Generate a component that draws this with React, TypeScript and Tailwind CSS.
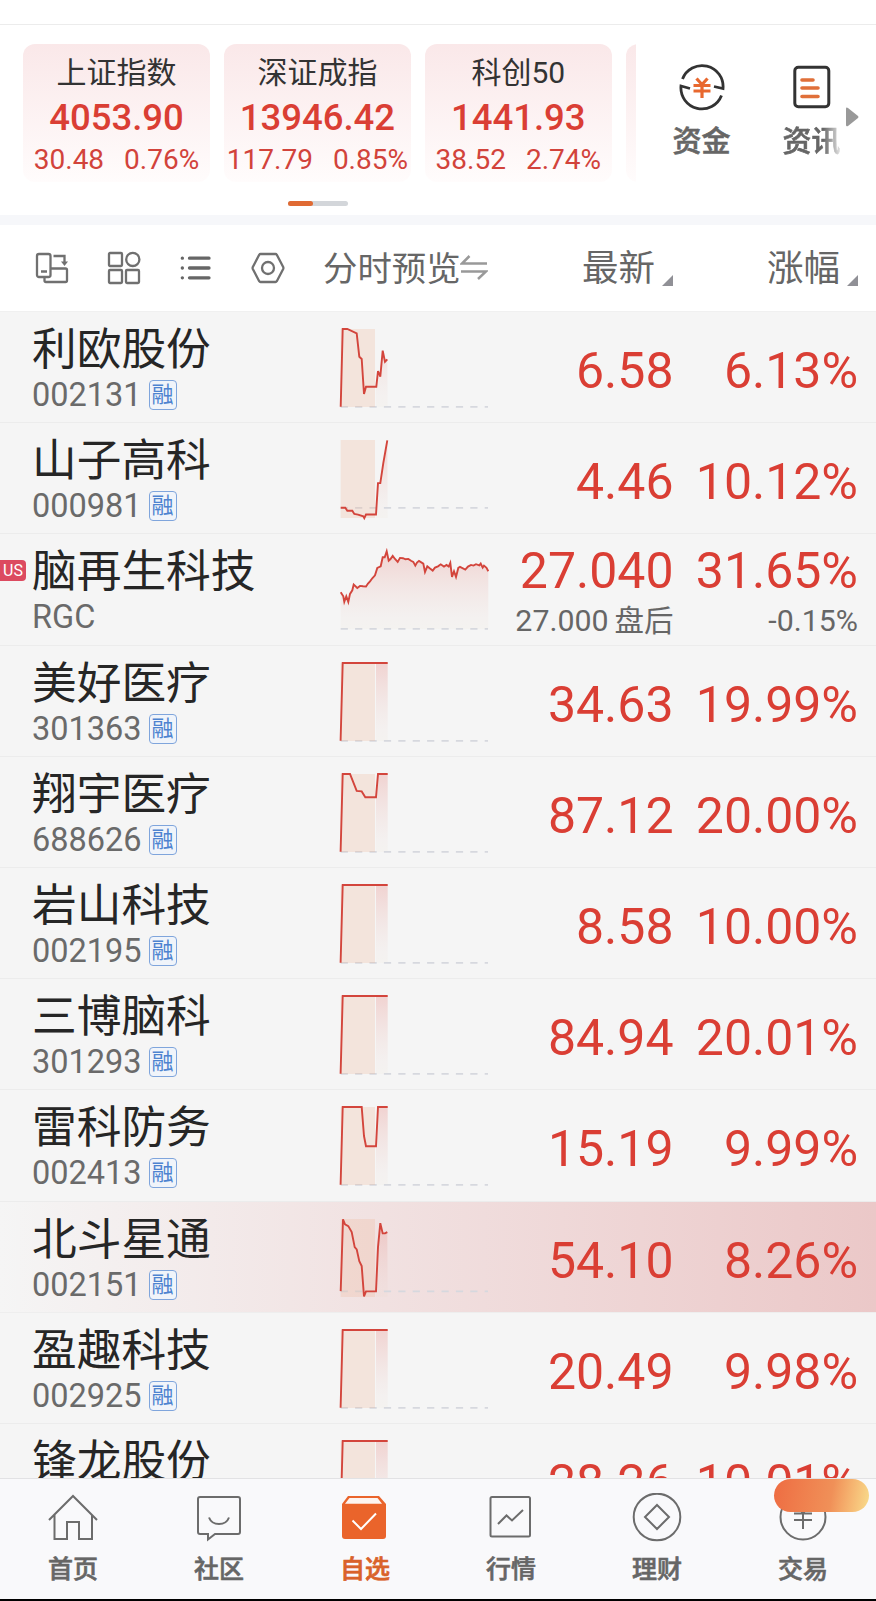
import React from 'react';

interface IndexCardProps {
  name: string;
  value: string;
  change: string;
  percent: string;
}

interface Stock {
  name: string;
  code: string;
  price: string;
  percent: string;
  line: string;
  base?: number;
  margin?: boolean;
  market?: string;
  fullDay?: boolean;
  afterPrice?: string;
  afterPercent?: string;
  highlight?: boolean;
}

const LIMIT_UP = '5.6,94.7 7.7,17 52.7,17';

const indexes: IndexCardProps[] = [
  { name: '上证指数', value: '4053.90', change: '30.48', percent: '0.76%' },
  { name: '深证成指', value: '13946.42', change: '117.79', percent: '0.85%' },
  { name: '科创50', value: '1441.93', change: '38.52', percent: '2.74%' },
];

const stocks: Stock[] = [
  {
    name: '利欧股份', code: '002131', price: '6.58', percent: '6.13%', margin: true,
    line: '5.7,94.7 7.7,17 12.3,17 21.7,21.3 24.3,44.7 26.7,47 29,82 31,74.7 41.3,74.7 43,59 45.3,64.7 47.7,38.7 50,49.7 52.3,47.3',
  },
  {
    name: '山子高科', code: '000981', price: '4.46', percent: '10.12%', margin: true, base: 84.8,
    line: '5.7,84.8 10.3,84.8 12.3,87.8 17.3,87.8 19.3,91 23,91.6 28.3,93.3 29.3,95.1 31,91.5 41,91.5 43,60.1 45.3,60.1 48.3,40.1 52.3,17.3',
  },
  {
    name: '脑再生科技', code: 'RGC', price: '27.040', percent: '31.65%', market: 'US', fullDay: true,
    afterPrice: '27.000', afterPercent: '-0.15%',
    line: '5.7,58.3 8.3,62.3 9.3,67.9 11.3,62.3 13.3,67.9 15,59.9 17.3,56.3 18.7,50.6 22.3,53.9 25,51.9 28,52.3 31,52.6 33,49.5 35,47.3 37.5,44 40,41.3 42.3,33.9 45.7,32.3 47.7,23.3 49.7,23.3 51.7,17.3 53.7,26.6 55.5,25 57.7,21.9 60,25 62.7,27.9 65,23.9 68,24.2 70.5,25.3 73.3,24.9 76,26.8 78.3,27.9 80.3,31.6 82,28.6 84,26.9 88.3,29.6 90,37.9 92.3,32.3 95,34.5 97.7,36.6 100,33.6 103,32.3 105.7,30.3 109,32.6 111.5,31 113.7,32.6 115.3,28.9 117,42.9 119,37.3 121,42.9 123.3,33.9 125,32.8 130.3,35.6 133,32.6 136,30.9 138.5,31.6 141,30.2 144.3,31.3 145.7,29.6 147.7,33.6 149,31.6 151.5,33.8 153.3,37.3',
  },
  { name: '美好医疗', code: '301363', price: '34.63', percent: '19.99%', margin: true, line: LIMIT_UP },
  {
    name: '翔宇医疗', code: '688626', price: '87.12', percent: '20.00%', margin: true,
    line: '5.6,94.7 7.7,17 15,17 21.7,33.9 26.7,34.4 30.3,40.2 41,40.2 43,17 52.7,17',
  },
  { name: '岩山科技', code: '002195', price: '8.58', percent: '10.00%', margin: true, line: LIMIT_UP },
  { name: '三博脑科', code: '301293', price: '84.94', percent: '20.01%', margin: true, line: LIMIT_UP },
  {
    name: '雷科防务', code: '002413', price: '15.19', percent: '9.99%', margin: true,
    line: '5.6,94.7 7.7,17 26.7,17 29,46 31,56.3 41,56.3 43,17 52.7,17',
  },
  {
    name: '北斗星通', code: '002151', price: '54.10', percent: '8.26%', margin: true, base: 89.4, highlight: true,
    line: '5.7,89.1 8,17.4 10,22.4 13.3,24.1 16.7,30.1 19.7,45.1 21.7,47.4 24.3,59.1 26.7,64.1 29,94.4 31,89.4 41,89.4 43,45.1 45.3,21.1 47.7,31.4 50,31.4 52.3,30.1',
  },
  { name: '盈趣科技', code: '002925', price: '20.49', percent: '9.98%', margin: true, line: LIMIT_UP },
  { name: '锋龙股份', code: '002931', price: '28.26', percent: '10.01%', margin: true, line: LIMIT_UP },
];

const IndexCard: React.FC<IndexCardProps> = ({ name, value, change, percent }) => (
  <div className="flex flex-col items-center shrink-0 w-[187px] h-[138px] rounded-xl bg-linear-to-b from-[#fae8e9] to-[#fffcfc] whitespace-nowrap">
    <div className="mt-[9px] h-10 text-[30px] leading-10 text-[#333]">{name}</div>
    <div className="h-[46px] mt-[2px] text-[36.5px] leading-[46px] font-medium text-[#da3e34]">{value}</div>
    <div className="flex gap-5 h-9 mt-px text-[28px] leading-9 text-[#d2433b]">
      <span>{change}</span>
      <span>{percent}</span>
    </div>
  </div>
);

const Sparkline: React.FC<{ stock: Stock; id: string }> = ({ stock, id }) => {
  const base = stock.base ?? 94.8;
  const end = stock.fullDay ? 153.3 : 52.7;
  return (
    <svg width="160" height="111" viewBox="0 0 160 111" className="shrink-0">
      <defs>
        <linearGradient id={`fill-${id}`} gradientUnits="userSpaceOnUse" x1="0" y1="17" x2="0" y2="95">
          <stop offset="0" stopColor="#e0483f" stopOpacity="0.2" />
          <stop offset="0.85" stopColor="#e0a090" stopOpacity="0.05" />
          <stop offset="1" stopColor="#e0c090" stopOpacity="0.05" />
        </linearGradient>
        <clipPath id={`clip-${id}`}>
          <rect x={stock.fullDay ? 5 : 41} y="0" width="150" height="111" />
        </clipPath>
      </defs>
      <polygon
        points={`5.7,95 ${stock.line} ${end},95`}
        fill={`url(#fill-${id})`}
        clipPath={`url(#clip-${id})`}
      />
      <path d={`M5.7 ${base}H153`} stroke="#d6d8de" strokeWidth="1.7" strokeDasharray="7.2 7.2" />
      {!stock.fullDay && <rect x="5.7" y="17" width="34.3" height="78" fill="#f0b497" fillOpacity="0.26" />}
      <polyline points={stock.line} fill="none" stroke="#d3453c" strokeWidth="1.9" />
    </svg>
  );
};

const StockRow: React.FC<{ stock: Stock; id: string }> = ({ stock, id }) => (
  <div
    className={
      stock.highlight
        ? 'flex shrink-0 h-[111.2px] border-b border-[#eee] bg-linear-to-r from-[#f5f5f5] to-[#ebc8c8]'
        : 'flex shrink-0 h-[111.2px] border-b border-[#ececec]'
    }
  >
    <div className="relative w-[335px] pl-8 shrink-0">
      {stock.market && (
        <span className="absolute left-0 top-[26px] w-[26px] h-[21px] pl-[3px] rounded-r bg-[#dc4a60] text-[16px] leading-[21px] text-white">
          {stock.market}
        </span>
      )}
      <div className="h-[61px] pt-[8px] text-[44.7px] leading-[60px] text-[#262626] whitespace-nowrap">{stock.name}</div>
      <div className="flex items-center gap-[7px] h-[44px] text-[32.5px] leading-[44px] text-[#6a6a6a]">
        <span>{stock.code}</span>
        {stock.margin && (
          <span className="flex items-center justify-center w-7 h-[30px] rounded-[4px] border border-[#7fa5dc] bg-[#f0f4fa] text-[22px] leading-none text-[#4d83d0]">
            融
          </span>
        )}
      </div>
    </div>
    <Sparkline stock={stock} id={id} />
    {stock.afterPrice ? (
      <>
        <div className="flex flex-col items-end w-[178.5px] shrink-0">
          <div className="h-[65px] pt-[7px] text-[50px] leading-[60px] text-[#da3e34]">{stock.price}</div>
          <div className="flex gap-[6px] h-[44px] text-[30.3px] leading-[44px] text-[#666] whitespace-nowrap">
            <span>{stock.afterPrice}</span>
            <span className="text-[29.5px]">盘后</span>
          </div>
        </div>
        <div className="flex flex-col items-end w-[184.5px] shrink-0">
          <div className="h-[65px] pt-[7px] text-[50px] leading-[60px] text-[#da3e34]">{stock.percent}</div>
          <div className="h-[44px] text-[30.3px] leading-[44px] text-[#666]">{stock.afterPercent}</div>
        </div>
      </>
    ) : (
      <>
        <div className="w-[178.5px] pt-[4px] shrink-0 text-right text-[50px] leading-[111px] text-[#da3e34]">{stock.price}</div>
        <div className="w-[184.5px] pt-[4px] shrink-0 text-right text-[50px] leading-[111px] text-[#da3e34]">{stock.percent}</div>
      </>
    )}
  </div>
);

const FundsIcon = () => (
  <svg width="48" height="48" viewBox="0 0 48 48" fill="none" stroke="#333" strokeWidth="2.8">
    <path d="M4.5 16A21 21 0 0 1 45 25.5L36 23.5" />
    <path d="M43.5 32.5A21 21 0 0 1 3 23L12 25.5" />
    <path d="M18.5 15.5L24 21.5L29.5 15.5M15.5 22.5H32.5M15.5 28H32.5M24 21.5V35" stroke="#e8682f" strokeWidth="3.2" />
  </svg>
);

const NewsIcon = () => (
  <svg width="38" height="44" viewBox="0 0 38 44" fill="none" stroke="#333" strokeWidth="3">
    <rect x="1.8" y="2.2" width="34" height="39.5" rx="3.5" />
    <path d="M9 15H20M9 23H25M9 31.5H25" stroke="#e0703a" strokeWidth="3.6" strokeLinecap="round" />
  </svg>
);

const SortMark = () => (
  <svg width="11" height="11" viewBox="0 0 12 12">
    <path d="M12 0V12H0Z" fill="#909096" />
  </svg>
);

const ToolIcons = () => (
  <div className="flex items-center gap-[36px] w-[286px] shrink-0">
    <svg width="36" height="36" viewBox="0 0 36 36" fill="none" stroke="#707070" strokeWidth="2.3" className="shrink-0">
      <rect x="3" y="4" width="13.5" height="23" rx="2" />
      <path d="M7 21.5H13M19.5 6H30.5V14" />
      <path d="M27 11.5H34L30.5 16Z" fill="#707070" stroke="none" />
      <path d="M17 18.5H31.5Q33 18.5 33 20V30.5Q33 32 31.5 32H12Q10.5 32 10.5 30.5V27" />
    </svg>
    <svg width="36" height="36" viewBox="0 0 36 36" fill="none" stroke="#707070" strokeWidth="2.3" className="shrink-0">
      <rect x="3" y="3" width="13" height="13" rx="1" />
      <circle cx="26.8" cy="9.4" r="6.6" />
      <rect x="3" y="20" width="13" height="13" rx="1" />
      <rect x="20" y="20" width="13" height="13" rx="1" />
    </svg>
    <svg width="36" height="36" viewBox="0 0 36 36" fill="none" stroke="#666" strokeWidth="3.3" strokeLinecap="round" className="shrink-0">
      <path d="M4.3 8.2H4.4M11.5 8.2H31M4.3 18H4.4M11.5 18H31M4.3 27.8H4.4M11.5 27.8H31" />
    </svg>
    <svg width="36" height="36" viewBox="0 0 36 36" fill="none" stroke="#707070" strokeWidth="2.3" strokeLinejoin="round" className="shrink-0">
      <path d="M10.5 4H25.5Q26.3 4 26.8 4.8L33.2 17Q33.6 18 33.2 19L26.8 31.2Q26.3 32 25.5 32H10.5Q9.7 32 9.2 31.2L2.8 19Q2.4 18 2.8 17L9.2 4.8Q9.7 4 10.5 4Z" />
      <circle cx="18" cy="18" r="6" />
    </svg>
  </div>
);

const navItems = [
  {
    label: '首页',
    icon: <path d="M1 27L25 3L49 27M6.5 22V46H19V29H31V46H44V22" />,
  },
  {
    label: '社区',
    icon: (
      <>
        <path d="M6 4H44Q46 4 46 6V39Q46 41 44 41H21L14 46.5V41H6Q4 41 4 39V6Q4 4 6 4Z" />
        <path d="M15 24.5Q17.5 31 25 31Q32.5 31 35 24.5" />
      </>
    ),
  },
  {
    label: '自选',
    active: true,
    icon: (
      <>
        <path d="M8 3H39L46 11V43Q46 46 43 46H5Q2 46 2 43V11Z" fill="#ea642b" stroke="none" />
        <path d="M9.5 5H37.5L42 10.7H5Z" fill="#fdf4f0" stroke="none" />
        <path d="M12.5 27.5L21 36L36 20.5" stroke="#fff" />
      </>
    ),
  },
  {
    label: '行情',
    icon: (
      <>
        <rect x="4.5" y="4" width="39.5" height="39.5" rx="1.5" />
        <path d="M12 31L20.5 22.5L26 27.5L37 17" />
      </>
    ),
  },
  {
    label: '理财',
    icon: (
      <>
        <circle cx="25" cy="24" r="23.3" />
        <path d="M25 12L37 24L25 36L13 24Z" />
      </>
    ),
  },
  {
    label: '交易',
    icon: (
      <>
        <circle cx="25" cy="24" r="22.5" />
        <path d="M17 11L25 20L33 11M16 20.5H34M16 27H34M25 20V36" />
      </>
    ),
  },
];

const App: React.FC = () => {
  return (
    <main className="flex flex-col w-[876px] h-[1601px] overflow-hidden bg-white font-[Roboto,'Noto_Sans_CJK_SC',sans-serif]">
      <div className="h-[25px] shrink-0 border-b border-[#ececec]" />

      <section className="flex h-[190px] shrink-0">
        <div className="w-[636px] shrink-0">
          <div className="flex gap-[13.9px] h-[157px] pt-[18.5px] pl-[23px] overflow-hidden">
            {indexes.map((item) => (
              <IndexCard key={item.name} {...item} />
            ))}
            <div className="shrink-0 w-[187px] h-[138px] rounded-xl bg-linear-to-b from-[#fae8e9] to-[#fffcfc]" />
          </div>
          <div className="w-[60px] h-[5px] mt-[19px] ml-[288px] rounded-full bg-[#d3d6da]">
            <div className="w-[25px] h-[5px] rounded-full bg-[#e06a33]" />
          </div>
        </div>
        <div className="flex w-[240px] pl-[11px]">
          <div className="flex flex-col items-center w-[109px] pt-[38px]">
            <FundsIcon />
            <span className="mt-[10px] text-[29px] leading-[42px] font-medium text-[#666] [-webkit-text-stroke:0.6px_#666]">资金</span>
          </div>
          <div className="flex flex-col items-center w-[111px] pt-[40px]">
            <NewsIcon />
            <span className="mt-[12px] text-[29px] leading-[42px] font-medium text-[#666] [-webkit-text-stroke:0.6px_#666] mask-r-from-70% mask-r-to-105%">资讯</span>
          </div>
          <svg width="13" height="20" viewBox="0 0 13 20" className="mt-[82px] -ml-[21px] shrink-0">
            <path d="M0 1.5Q0 0 2 1L12 9Q13 10 12 11L2 19Q0 20 0 18Z" fill="#999" />
          </svg>
        </div>
      </section>

      <div className="h-[10px] shrink-0 bg-[#f6f7fa]" />

      <section className="flex items-center h-[87px] pl-[34px] shrink-0 border-b border-[#f0f0f0] text-[#666] whitespace-nowrap">
        <ToolIcons />
        <div className="flex items-center w-[170px] ml-[3px]">
          <span className="pt-px text-[34.4px] leading-[50px]">分时预览</span>
          <svg width="28" height="28" viewBox="0 0 28 28" fill="none" stroke="#999" strokeWidth="2.5" className="shrink-0 -ml-px">
            <path d="M27 9.5H2L9.5 2M1 17.5H26L18 25" />
          </svg>
        </div>
        <div className="flex items-end justify-end gap-[7px] w-[180px] shrink-0">
          <span className="translate-y-px text-[36.5px] leading-[50px]">最新</span>
          <span className="pb-[7px]"><SortMark /></span>
        </div>
        <div className="flex items-end justify-end gap-[7px] w-[185px] shrink-0">
          <span className="translate-y-px text-[36.5px] leading-[50px]">涨幅</span>
          <span className="pb-[7px]"><SortMark /></span>
        </div>
      </section>

      <section className="flex flex-col flex-1 min-h-0 overflow-hidden bg-[#f5f5f5]">
        {stocks.map((stock) => (
          <StockRow key={stock.name} stock={stock} id={stock.code} />
        ))}
      </section>

      <nav className="relative grid grid-cols-6 h-[121px] shrink-0 border-t border-[#e2e2e4] bg-[#f9f9fb]">
        {navItems.map(({ label, icon, active }) => (
          <div key={label} className="flex flex-col items-center pt-[14px]">
            <svg width="50" height="50" viewBox="0 0 50 50" fill="none" stroke="#6c6c6c" strokeWidth="2">
              {icon}
            </svg>
            <span
              className={
                active
                  ? 'mt-[9px] text-[25px] leading-[36px] font-medium text-[#d9622b] [-webkit-text-stroke:0.7px_#d9622b]'
                  : 'mt-[9px] text-[25px] leading-[36px] font-medium text-[#666] [-webkit-text-stroke:0.6px_#666]'
              }
            >
              {label}
            </span>
          </div>
        ))}
        <div className="absolute left-[773.5px] top-0 w-[95px] h-[33px] rounded-full bg-linear-100 from-[#ee6c42] via-[#f09058] via-60% to-[#f8dc8c]" />
      </nav>
      <div className="h-[2px] shrink-0 bg-black" />
    </main>
  );
};

export default App;
